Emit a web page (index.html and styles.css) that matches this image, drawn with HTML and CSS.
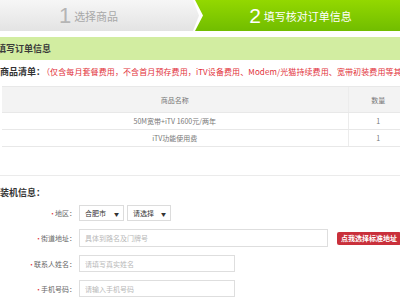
FILE: index.html
```html
<!DOCTYPE html>
<html lang="zh-CN">
<head>
  <meta charset="UTF-8" />
  <title>填写订单信息</title>
  <link rel="stylesheet" href="styles.css">
</head>
<body>

<div class="page">
  <!-- 步骤条 -->
  <div class="steps">
    <div class="step stepDone"><span class="num">1</span>选择商品</div>
    <div class="step stepCur"><span class="num">2</span>填写核对订单信息</div>
  </div>

  <div class="bar">填写订单信息</div>

  <!-- 商品清单 -->
  <div class="secTitle first">商品清单：<span class="note">（仅含每月套餐费用，不含首月预存费用，iTV设备费用、Modem/光猫持续费用、宽带初装费用等其他费用）</span></div>

  <table class="goods">
    <tr>
      <th class="name">商品名称</th>
      <th class="qty">数量</th>
    </tr>
    <tr>
      <td class="name">50M宽带+iTV 1600元/两年</td>
      <td class="qty">1</td>
    </tr>
    <tr>
      <td class="name">iTV功能使用费</td>
      <td class="qty">1</td>
    </tr>
  </table>

  <div class="divider"></div>

  <!-- 装机信息 -->
  <div class="secTitle">装机信息：</div>

  <div class="form">
    <div class="label"><span class="req">•</span>地区：</div>
    <div class="field">
      <div class="select sel1">合肥市<span class="arrow">▼</span></div>
      <div class="select sel2">请选择<span class="arrow">▼</span></div>
    </div>

    <div class="label"><span class="req">•</span>街道地址：</div>
    <div class="field">
      <input class="input wide" type="text" placeholder="具体到路名及门牌号">
      <button class="pickBtn">点我选择标准地址</button>
    </div>

    <div class="label"><span class="req">•</span>联系人姓名：</div>
    <div class="field">
      <input class="input" type="text" placeholder="请填写真实姓名">
    </div>

    <div class="label"><span class="req">•</span>手机号码：</div>
    <div class="field">
      <input class="input" type="text" placeholder="请输入手机号码">
    </div>
  </div>
</div>

</body>
</html>
```

FILE: styles.css
```css
* { box-sizing: border-box; }

body {
  margin: 0;
  overflow: hidden;
  font-family: "Noto Sans CJK SC", "Liberation Sans", sans-serif;
  background: #fff;
  color: #333;
}

.page {
  width: 420px;
}

/* 步骤条 */
.steps {
  display: flex;
  height: 31px;
}

.step {
  display: flex;
  align-items: center;
  justify-content: center;
  font-size: 11px;
}

.step .num {
  font-family: "Liberation Sans", sans-serif;
  font-size: 22px;
  margin-right: 3px;
  line-height: 1;
}

.stepDone {
  width: 199px;
  padding-right: 22px;
  background: linear-gradient(to bottom, #f6f6f6, #e3e3e3);
  color: #a8a8a8;
  clip-path: polygon(0 0, 193px 0, 100% 50%, 193px 100%, 0 100%);
}

.stepDone .num { color: #b5b5b5; }

.stepCur {
  flex: 1;
  margin-left: -4px;
  padding-right: 14px;
  background: linear-gradient(to bottom, #93d800, #71bd00);
  color: #fff;
  clip-path: polygon(0 0, 100% 0, 100% 100%, 0 100%, 8px 50%);
}

.stepCur .num { font-size: 21px; }

.bar {
  margin-top: 6px;
  height: 23px;
  line-height: 23px;
  margin-left: -3px;
  background: #d2eda1;
  font-size: 9px;
  font-weight: bold;
  color: #3a3a3a;
}

.secTitle {
  margin-top: 11px;
  height: 12px;
  line-height: 12px;
  font-size: 9px;
  font-weight: bold;
  color: #333;
  white-space: nowrap;
}

.secTitle.first {
  margin-top: 6px;
}

.note {
  margin-left: 1px;
  font-size: 8px;
  font-weight: normal;
  letter-spacing: 0.1px;
  color: #e2313a;
}

/* 商品表格 */
.goods {
  margin-top: 8px;
  margin-left: 2px;
  width: 406px;
  border-collapse: collapse;
  font-size: 7px;
  color: #777;
}

.goods th, .goods td {
  border-top: 1px solid #e8e8e8;
  border-bottom: 1px solid #e8e8e8;
  font-weight: normal;
  text-align: center;
}

.goods th {
  height: 26px;
  background: #f3f3f3;
}

.goods td {
  height: 17px;
}

.goods .qty {
  width: 60px;
  border-left: 1px solid #ececec;
}

.divider {
  margin-top: 28px;
  border-top: 1px solid #ebebeb;
}

/* 表单 */
.form {
  margin-top: 6px;
  display: grid;
  grid-template-columns: 76px auto;
  column-gap: 3px;
  row-gap: 8px;
  align-items: center;
}

.label {
  text-align: right;
  font-size: 7px;
  color: #666;
  white-space: nowrap;
}

.req {
  color: #e2313a;
  margin-right: -1px;
}

.field {
  display: flex;
  align-items: center;
}

.select {
  display: flex;
  align-items: center;
  justify-content: space-between;
  height: 16px;
  padding: 0 4px 0 5px;
  border: 1px solid #dcdcdc;
  font-size: 7px;
  color: #333;
  margin-right: 3px;
}

.sel1 { width: 45px; }
.sel2 { width: 44px; }

.arrow {
  font-size: 5px;
  color: #333;
}

.input {
  width: 156px;
  height: 17px;
  padding: 0 5px;
  border: 1px solid #dedede;
  font-family: inherit;
  font-size: 7px;
  color: #333;
  outline: none;
}

.input::placeholder {
  color: #b8b8b8;
}

.input.wide {
  width: 249px;
  height: 18px;
}

.pickBtn {
  margin-left: 9px;
  height: 13px;
  padding: 0 4px;
  border: none;
  border-radius: 2px;
  background: #c9303b;
  color: #fff;
  font-family: inherit;
  font-size: 7px;
  font-weight: bold;
  white-space: nowrap;
}
```
